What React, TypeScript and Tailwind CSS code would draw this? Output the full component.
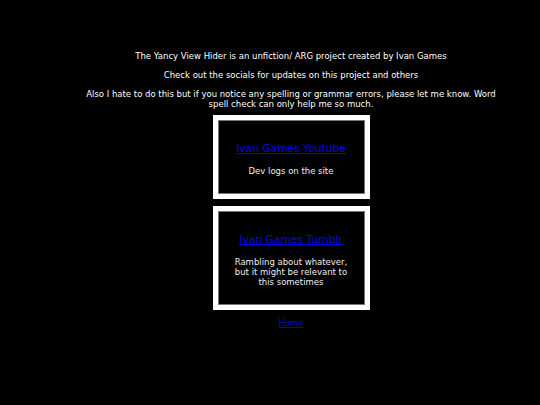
import React from 'react';

const links = [
  { title: 'Ivan Games Youtube', desc: ['Dev logs on the site'] },
  { title: 'Ivan Games Tumblr', desc: ['Rambling about whatever,', 'but it might be relevant to', 'this sometimes'] },
];

const App: React.FC = () => {
  return (
    <div className="min-h-[405px] bg-black text-white pt-[51px] pl-[42px] text-[8.5px] leading-[10px]" style={{ fontFamily: '"DejaVu Sans", Verdana, sans-serif' }}>
      <div className="flex flex-col items-center gap-[9px] text-center">
        <p>The Yancy View Hider is an unfiction/ ARG project created by Ivan Games</p>
        <p>Check out the socials for updates on this project and others</p>
        <p className="max-w-[420px]">
          Also I hate to do this but if you notice any spelling or grammar errors, please let me know. Word spell check can only help me so much.
        </p>
      </div>
      <div className="flex flex-col items-center gap-[7px] mt-[6px]">
        {links.map((l) => (
          <div key={l.title} className="w-[157px] border-[5px] border-white">
            <div className="border border-[#777] bg-black px-2 pt-[22px] pb-[17px] text-center">
              <a href="#" className="text-[10.7px] leading-[12px] text-[#0000ee] underline">{l.title}</a>
              <div className="mt-[11px] text-[#eee]">
                {l.desc.map((d) => <div key={d}>{d}</div>)}
              </div>
            </div>
          </div>
        ))}
        <a href="#" className="mt-[1px] text-[#0000ee] underline">Home</a>
      </div>
    </div>
  );
};

export default App;
